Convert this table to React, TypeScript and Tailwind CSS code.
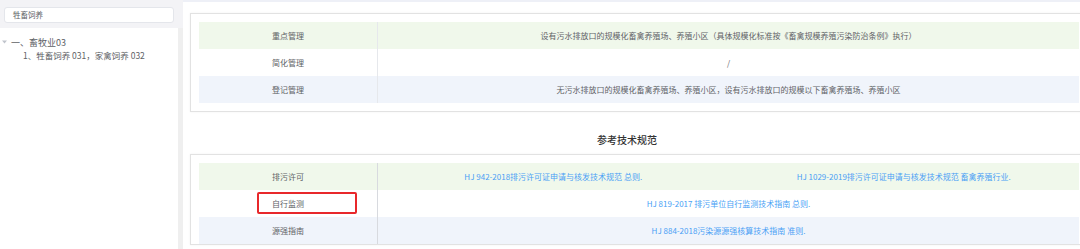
const font = "font-['Noto_Sans_CJK_SC','Noto_Sans',sans-serif]";

const manageRows = [
  {
    label: "重点管理",
    text: "设有污水排放口的规模化畜禽养殖场、养殖小区（具体规模化标准按《畜禽规模养殖污染防治条例》执行）",
    bg: "bg-[#f0f8eb]",
  },
  { label: "简化管理", text: "/", bg: "bg-white" },
  {
    label: "登记管理",
    text: "无污水排放口的规模化畜禽养殖场、养殖小区，设有污水排放口的规模以下畜禽养殖场、养殖小区",
    bg: "bg-[#f0f4fb]",
  },
];

const specRows = [
  {
    label: "排污许可",
    links: [
      "HJ 942-2018排污许可证申请与核发技术规范 总则.",
      "HJ 1029-2019排污许可证申请与核发技术规范 畜禽养殖行业.",
    ],
    bg: "bg-[#f0f8eb]",
    marked: false,
  },
  {
    label: "自行监测",
    links: ["HJ 819-2017 排污单位自行监测技术指南 总则."],
    bg: "bg-white",
    marked: true,
  },
  {
    label: "源强指南",
    links: ["HJ 884-2018污染源源强核算技术指南 准则."],
    bg: "bg-[#f0f4fb]",
    marked: false,
  },
];

const Card: React.FC<{ children: React.ReactNode; className?: string }> = ({
  children,
  className,
}) => (
  <div
    className={`w-[898px] border border-[#e2e2e2] shadow-[0_0_2px_rgba(0,0,0,0.06)] bg-white px-2 ${className || ""}`}
  >
    {children}
  </div>
);

const App: React.FC = () => {
  return (
    <div
      className={`flex w-[1080px] h-[249px] overflow-hidden bg-white text-[#606266] ${font}`}
    >
      {/* left tree */}
      <div className="w-[183px] shrink-0 flex flex-col">
        <div className="h-[28px] bg-[#f3f3f6] pl-1 pr-[9px] pt-[7px]">
          <div className="h-[16px] bg-white border border-[#e4e6eb] rounded-[3px] flex items-center pl-[8px] text-[7.5px] text-[#606266]">
            牲畜饲养
          </div>
        </div>
        <div className="flex-1 flex">
          <div className="flex-1 pt-[7px] leading-none">
            <div className="flex items-center h-[14px]">
              <span className="w-[11px] pl-[2px] flex items-center">
                <svg width="5" height="4" viewBox="0 0 5 4">
                  <path d="M0 0.5 L5 0.5 L2.5 3.5 Z" fill="#c0c4cc" />
                </svg>
              </span>
              <span className="text-[9px] text-[#606266]">一、畜牧业03</span>
            </div>
            <div className="flex items-center h-[13px] pl-[23px] text-[8.5px] text-[#606266]">
              1、牲畜饲养 031，家禽饲养 032
            </div>
          </div>
          <div className="w-[5px] bg-[#efefef]" />
        </div>
      </div>

      {/* right content */}
      <div className="flex-1 border-t-2 border-[#eef0f7] pl-[7px] pt-[11px] overflow-hidden">
        <Card className="py-2">
          {manageRows.map((r) => (
            <div key={r.label} className={`flex h-[27px] ${r.bg}`}>
              <div className="w-[179px] shrink-0 flex items-center justify-center text-[8px] border-r border-[#e6e8ec]">
                {r.label}
              </div>
              <div className="flex-1 flex items-center justify-center text-[8px]">
                {r.text}
              </div>
            </div>
          ))}
        </Card>

        <div className="h-[42px] flex items-end justify-center pb-[7px] pr-[16px] text-[10px] font-medium text-[#333]">
          参考技术规范
        </div>

        <Card className="pt-2">
          {specRows.map((r) => (
            <div key={r.label} className={`flex h-[27px] ${r.bg}`}>
              <div className="relative w-[179px] shrink-0 flex items-center justify-center text-[8px] border-r border-[#d8dadf]">
                {r.label}
                {r.marked && (
                  <div className="absolute left-[58px] top-[2px] w-[100px] h-[22px] border-2 border-[#e8282b] rounded-[2px]" />
                )}
              </div>
              <div className="flex-1 flex items-center">
                {r.links.map((l) => (
                  <div
                    key={l}
                    className="flex-1 text-center text-[8px] text-[#4a9ff5]"
                  >
                    {l}
                  </div>
                ))}
              </div>
            </div>
          ))}
        </Card>
      </div>
    </div>
  );
};

export default App;
